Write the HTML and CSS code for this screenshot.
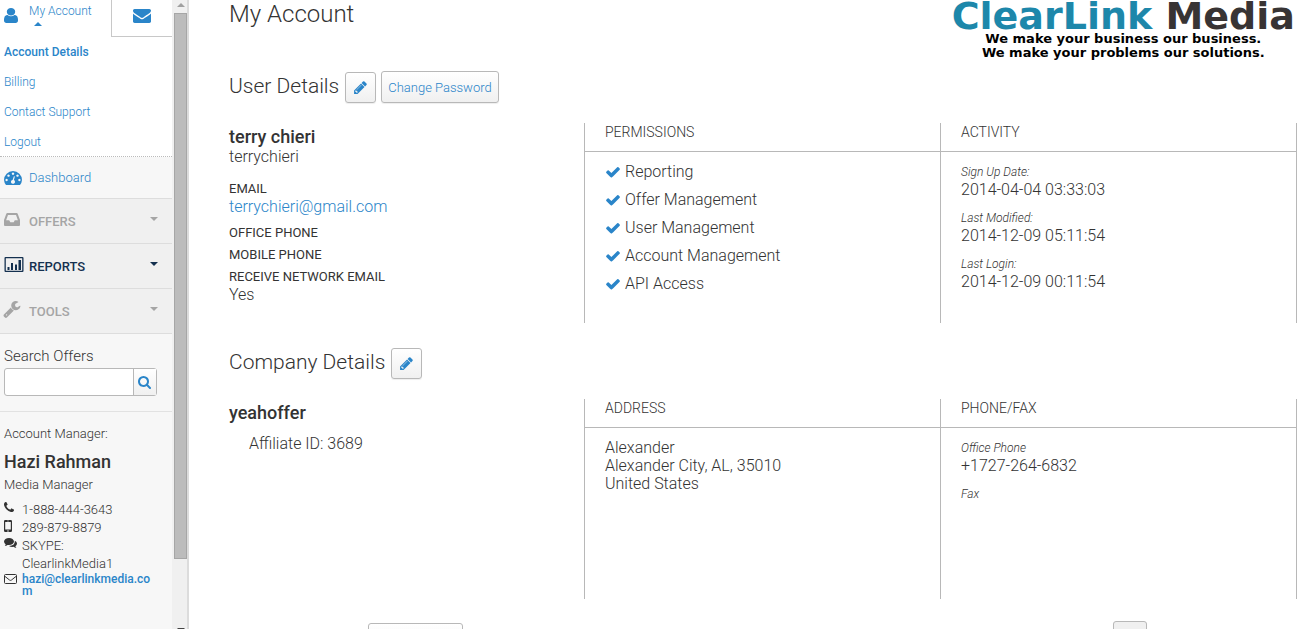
FILE: index.html
```html
<!DOCTYPE html>
<html lang="en">

<head>
    <meta charset="UTF-8">
    <meta name="viewport" content="width=device-width, initial-scale=1.0">
    <title>My Account</title>
    <link rel="stylesheet" href="styles.css">
</head>

<body>
    <!-- Shared icons -->
    <svg class="sprite" width="0" height="0" aria-hidden="true">
        <symbol id="pencil" viewBox="0 0 1792 1792">
            <path d="M491 1536l91-91-235-235-91 91v107h128v128h107zm523-928q0-22-22-22-10 0-17 7l-542 542q-7 7-7 17 0 22 22 22 10 0 17-7l542-542q7-7 7-17zm-54-192l416 416-832 832h-416v-416zm683 96q0 53-37 90l-166 166-416-416 166-165q36-38 90-38 53 0 91 38l235 234q37 39 37 91z"/>
        </symbol>
        <symbol id="check" viewBox="0 0 1792 1792">
            <path d="M1671 566q0 40-28 68l-724 724-136 136q-28 28-68 28t-68-28l-136-136-362-362q-28-28-28-68t28-68l136-136q28-28 68-28t68 28l294 295 656-657q28-28 68-28t68 28l136 136q28 28 28 68z"/>
        </symbol>
    </svg>

    <aside class="sidebar">
        <div class="sidebar-content">
            <div class="tabs">
                <a class="tab-account" href="#">
                    <svg class="icon-user" width="14" height="15" viewBox="256 128 1280 1536" preserveAspectRatio="none">
                        <path d="M1536 1399q0 109-62.5 187t-150.5 78h-854q-88 0-150.5-78t-62.5-187q0-85 8.5-160.5t31.5-152 58.5-131 94-89 134.5-34.5q131 128 313 128t313-128q76 0 134.5 34.5t94 89 58.5 131 31.5 152 8.5 160.5zm-256-887q0 159-112.5 271.5t-271.5 112.5-271.5-112.5-112.5-271.5 112.5-271.5 271.5-112.5 271.5 112.5 112.5 271.5z"/>
                    </svg>
                    <span class="tab-label">My Account<span class="caret-up"></span></span>
                </a>
                <a class="tab-mail" href="#" aria-label="Messages">
                    <svg width="18" height="14" viewBox="0 256 1792 1408" preserveAspectRatio="none">
                        <path d="M1792 710v794q0 66-47 113t-113 47h-1472q-66 0-113-47t-47-113v-794q44 49 101 87 362 246 497 345 57 42 92.500 65.500t94.500 48 110 24.500h2q51 0 110-24.500t94.500-48 92.500-65.500q170-123 498-345 57-39 100-87zm0-294q0 79-49 151t-122 123q-376 261-468 325-10 7-42.500 31t-54 38.500-52 32.500-57.500 27-50 9h-2q-23 0-50-9t-57.500-27-52-32.500-54-38.500-42.500-31q-91-64-262-182.500t-205-142.500q-62-42-117-115.500t-55-136.500q0-78 41.500-130t118.500-52h1472q65 0 112.500 47t47.500 113z"/>
                    </svg>
                </a>
            </div>

            <nav class="account-menu">
                <a class="active" href="#">Account Details</a>
                <a href="#">Billing</a>
                <a href="#">Contact Support</a>
                <a href="#">Logout</a>
            </nav>

            <nav class="main-menu">
                <a class="menu-dashboard" href="#">
                    <svg width="18" height="14" viewBox="0 0 18 14">
                        <path fill-rule="evenodd" d="M2 14A9 9 0 0 1 0 9a9 9 0 0 1 18 0 9 9 0 0 1-2 5zM2.600 7.800a1.200 1.200 0 1 0 .01 0zM4.500 3.400a1.200 1.200 0 1 0 .01 0zM9 1.500a1.200 1.200 0 1 0 .01 0zM13.500 3.400a1.200 1.200 0 1 0 .01 0zM15.400 7.800a1.200 1.200 0 1 0 .01 0zM9.900 5.200 8.600 8.900a2 2 0 1 0 1.300.200L10.900 5.500z"/>
                    </svg>
                    Dashboard
                </a>
                <a class="menu-group" href="#">
                    <svg width="16" height="13" viewBox="0 0 16 13">
                        <path fill-rule="evenodd" d="M3.300 0h9.400q.7 0 1 .7L16 7v5q0 1-1 1H1q-1 0-1-1V7L2.300.700Q2.600 0 3.300 0zM4 2 2.100 7.200h3.100L6.300 9.300h3.400l1.100-2.100h3.100L12 2z"/>
                    </svg>
                    OFFERS
                    <span class="caret-down"></span>
                </a>
                <a class="menu-group menu-open" href="#">
                    <svg width="19" height="15" viewBox="0 0 19 15">
                        <path fill-rule="evenodd" d="M1 0h17q1 0 1 1v13q0 1-1 1H1q-1 0-1-1V1q0-1 1-1zM1.300 1.300v12.400h16.400V1.300z"/>
                        <path d="M3 10h2v3H3zM6.500 6h2v7h-2zM10.500 7.500h2V13h-2zM14 3h2.500v10H14z"/>
                    </svg>
                    REPORTS
                    <span class="caret-down"></span>
                </a>
                <a class="menu-group" href="#">
                    <svg width="17" height="17" viewBox="85 128 1650 1650">
                        <path d="M448 1472q0-26-19-45t-45-19-45 19-19 45 19 45 45 19 45-19 19-45zm644-420l-682 682q-37 37-90 37-52 0-91-37l-106-108q-38-36-38-90 0-53 38-91l681-681q39 98 114.500 173.500t173.500 114.500zm634-435q0 39-23 106-47 134-164.500 217.500t-258.500 83.500q-185 0-316.500-131.500t-131.500-316.500 131.500-316.500 316.500-131.500q58 0 121.500 16.500t107.500 46.500q16 11 16 28t-16 28l-293 169v224l193 107q5-3 79-48.500t135.500-81 70.500-35.500q15 0 23.500 10t8.500 25z"/>
                    </svg>
                    TOOLS
                    <span class="caret-down"></span>
                </a>
            </nav>

            <form class="search">
                <label for="search">Search Offers</label>
                <div class="search-box">
                    <input type="text" id="search" name="search">
                    <button type="button" aria-label="Search">
                        <svg width="13" height="13" viewBox="64 128 1664 1664">
                            <path d="M1216 832q0-185-131.500-316.500t-316.500-131.500-316.500 131.500-131.500 316.500 131.500 316.500 316.500 131.500 316.500-131.500 131.500-316.500zm512 832q0 52-38 90t-90 38q-54 0-90-38l-343-342q-179 124-399 124-143 0-273.500-55.500t-225-150-150-225-55.500-273.500 55.500-273.500 150-225 225-150 273.500-55.500 273.500 55.500 225 150 150 225 55.500 273.500q0 220-124 399l343 343q37 37 37 90z"/>
                        </svg>
                    </button>
                </div>
            </form>

            <div class="manager">
                <p>Account Manager:</p>
                <h4>Hazi Rahman</h4>
                <p>Media Manager</p>
                <ul class="contacts">
                    <li>
                        <svg width="10" height="10" viewBox="192 128 1408 1408">
                            <path d="M1600 1240q0 27-10 70.500t-21 68.500q-21 50-122 106-94 51-186 51-27 0-53-3.500t-57.500-12.500-47-14.500-55.500-20.500-49-18q-98-35-175-83-127-79-264-216t-216-264q-48-77-83-175-3-9-18-49t-20.500-55.500-14.500-47-12.500-57.500-3.500-53q0-92 51-186 56-101 106-122 25-11 68.500-21t70.500-10q14 0 21 3 18 6 53 76 11 19 30 54t35 63.500 31 53.500q3 4 17.500 25t21.500 35.500 7 28.500q0 20-28.500 50t-62 55-62 53-28.500 46q0 9 5 22.500t8.500 20.500 14 24 11.500 19q76 137 174 235t235 174q2 1 19 11.500t24 14 20.500 8.500 22.500 5q18 0 46-28.500t53-62 55-62 50-28.500q14 0 28.500 7t35.500 21.500 25 17.500q25 15 53.500 31t63.500 35 54 30q70 35 76 53 3 7 3 21z"/>
                        </svg>
                        <span>1-888-444-3643</span>
                    </li>
                    <li>
                        <svg width="8" height="12" viewBox="0 0 8 12">
                            <path fill-rule="evenodd" d="M1.300 0h5.400Q8 0 8 1.300v9.400Q8 12 6.700 12H1.300Q0 12 0 10.700V1.300Q0 0 1.300 0zM1.200 2v7.600h5.600V2zM4 10.200a.7.7 0 1 0 .01 0zM3 .8v.4h2V.8z"/>
                        </svg>
                        <span>289-879-8879</span>
                    </li>
                    <li>
                        <svg width="13" height="10" viewBox="0 0 13 10">
                            <path d="M5 0c2.800 0 5 1.600 5 3.500S7.800 7 5 7q-.8 0-1.500-.1Q2.400 7.900.7 8.100q.9-.8 1-1.700Q0 5.300 0 3.500C0 1.600 2.200 0 5 0z"/>
                            <path d="M10.900 2.700Q13 3.800 13 5.500q0 1.600-1.600 2.700.2.900 1 1.700-1.700-.1-2.900-1.100-2.600.5-4.500-.9 5.900 0 5.900-5.200z"/>
                        </svg>
                        <span>SKYPE: ClearlinkMedia1</span>
                    </li>
                    <li>
                        <svg width="13" height="10" viewBox="0 0 13 10">
                            <path fill="none" stroke="#333" d="M1.500.5h10q1 0 1 1v7q0 1-1 1h-10q-1 0-1-1v-7q0-1 1-1zM.7 2.200 5.500 6q1 .8 2 0l4.800-3.800"/>
                        </svg>
                        <a href="#">hazi@clearlinkmedia.com</a>
                    </li>
                </ul>
            </div>
        </div>

        <div class="scrollbar" aria-hidden="true">
            <span class="arrow-up"></span>
            <span class="thumb"></span>
            <span class="arrow-down"></span>
        </div>
    </aside>

    <main class="content">
        <header class="page-header">
            <h1>My Account</h1>
            <div class="logo">
                <div class="logo-name">ClearLink <span>Media</span></div>
                <div class="logo-tag">We make your business our business.<br>We make your problems our solutions.</div>
            </div>
        </header>

        <section class="section">
            <div class="section-title">
                <h2>User Details</h2>
                <button type="button" class="btn btn-icon" aria-label="Edit user details">
                    <svg width="15" height="15"><use href="#pencil"/></svg>
                </button>
                <button type="button" class="btn">Change Password</button>
            </div>
            <div class="columns">
                <div class="summary">
                    <h3>terry chieri</h3>
                    <p>terrychieri</p>
                    <dl>
                        <dt>EMAIL</dt>
                        <dd><a href="#">terrychieri@gmail.com</a></dd>
                        <dt>OFFICE PHONE</dt>
                        <dt>MOBILE PHONE</dt>
                        <dt>RECEIVE NETWORK EMAIL</dt>
                        <dd>Yes</dd>
                    </dl>
                </div>
                <div class="panel">
                    <h5>PERMISSIONS</h5>
                    <ul class="permissions">
                        <li><svg width="16" height="16"><use href="#check"/></svg>Reporting</li>
                        <li><svg width="16" height="16"><use href="#check"/></svg>Offer Management</li>
                        <li><svg width="16" height="16"><use href="#check"/></svg>User Management</li>
                        <li><svg width="16" height="16"><use href="#check"/></svg>Account Management</li>
                        <li><svg width="16" height="16"><use href="#check"/></svg>API Access</li>
                    </ul>
                </div>
                <div class="panel">
                    <h5>ACTIVITY</h5>
                    <dl class="facts">
                        <dt>Sign Up Date:</dt>
                        <dd>2014-04-04 03:33:03</dd>
                        <dt>Last Modified:</dt>
                        <dd>2014-12-09 05:11:54</dd>
                        <dt>Last Login:</dt>
                        <dd>2014-12-09 00:11:54</dd>
                    </dl>
                </div>
            </div>
        </section>

        <section class="section section-company">
            <div class="section-title">
                <h2>Company Details</h2>
                <button type="button" class="btn btn-icon" aria-label="Edit company details">
                    <svg width="15" height="15"><use href="#pencil"/></svg>
                </button>
            </div>
            <div class="columns">
                <div class="summary">
                    <h3>yeahoffer</h3>
                    <p class="affiliate">Affiliate ID: 3689</p>
                </div>
                <div class="panel">
                    <h5>ADDRESS</h5>
                    <address>Alexander<br>Alexander City, AL, 35010<br>United States</address>
                </div>
                <div class="panel">
                    <h5>PHONE/FAX</h5>
                    <dl class="facts">
                        <dt>Office Phone</dt>
                        <dd>+1727-264-6832</dd>
                        <dt>Fax</dt>
                    </dl>
                </div>
            </div>
        </section>

        <!-- Next section, continues below the fold -->
        <section class="section-title section-next">
            <button type="button" class="btn btn-add" aria-label="Add"></button>
            <button type="button" class="btn btn-page" aria-label="Page"></button>
        </section>
    </main>
</body>

</html>
```
FILE: styles.css
```css
* {
    box-sizing: border-box;
}

body {
    display: flex;
    height: 100vh;
    margin: 0;
    overflow: hidden;
    background: #fff;
    color: #333;
    font-family: Roboto, Arial, sans-serif;
    font-size: 16px;
    font-weight: 300;
    line-height: 18px;
}

h1, h2, h3, h4, h5, p, ul, dl, dd {
    margin: 0;
    padding: 0;
}

ul {
    list-style: none;
}

a {
    color: #2a85c9;
    text-decoration: none;
}

svg {
    display: block;
    flex: none;
    fill: currentColor;
}

.sprite {
    position: absolute;
}

/* Sidebar */
.sidebar {
    display: flex;
    flex: none;
    width: 189px;
    background: #f7f7f7;
    font-size: 13px;
}

.sidebar-content {
    flex: 1;
    min-width: 0;
}

.tabs {
    display: flex;
    height: 37px;
    background: #fff;
    font-size: 12px;
}

.tab-account {
    display: flex;
    flex: 1;
    gap: 11px;
    padding: 2px 0 0 4px;
}

.icon-user {
    margin-top: 6px;
}

.tab-mail {
    display: flex;
    align-items: center;
    justify-content: center;
    width: 61px;
    padding-bottom: 4px;
    border-left: 1px solid #c8c8c8;
    border-bottom: 1px solid #c8c8c8;
}

.caret-up {
    display: block;
    width: 8px;
    margin: 2px 0 0 5px;
    border: 4px solid transparent;
    border-top: 0;
    border-bottom-color: #2a85c9;
}

.account-menu {
    height: 120px;
    background: #fff;
    border-bottom: 1px dotted #bbb;
    font-size: 12px;
}

.account-menu a {
    display: block;
    padding-left: 4px;
    line-height: 30px;
}

.account-menu .active {
    font-weight: 500;
}

.main-menu a {
    display: flex;
    align-items: center;
    height: 45px;
    padding: 0 14px 0 4px;
    border-bottom: 1px solid #ddd;
}

.main-menu svg {
    margin-right: 7px;
}

.main-menu .menu-dashboard {
    height: 42px;
}

.main-menu .menu-group {
    padding-top: 2px;
    background: #f0f0f0;
    color: #a5a5a5;
    font-weight: 500;
}

.menu-group svg {
    width: 20px;
    margin: 0 5px 5px 0;
}

.menu-group svg:not([width="19"]) {
    margin-left: -2px;
    margin-right: 7px;
}

.main-menu .menu-open {
    color: #14304f;
}

.caret-down {
    margin: 0 0 6px auto;
    border: 4px solid transparent;
    border-bottom: 0;
    border-top-color: currentColor;
}

.search {
    padding: 13px 15px 15px 4px;
    border-bottom: 1px solid #e2e2e2;
}

.search label {
    display: block;
    margin-bottom: 3px;
    font-size: 15px;
}

.search-box {
    display: flex;
    height: 28px;
    border: 1px solid #b8b8b8;
    border-radius: 3px;
    background: #fff;
}

.search-box input {
    flex: 1;
    min-width: 0;
    border: 0;
    background: none;
}

.search-box button {
    width: 23px;
    padding: 0 0 0 4px;
    border: 0;
    border-left: 1px solid #b8b8b8;
    background: linear-gradient(#fff, #f0f0f0);
    color: #2a85c9;
}

.manager {
    padding: 13px 15px 0 4px;
}

.manager h4 {
    margin: 8px 0 3px;
    font-size: 18px;
    font-weight: 500;
    line-height: 22px;
}

.contacts {
    margin-top: 7px;
}

.contacts li {
    display: flex;
    align-items: flex-start;
    padding-right: 4px;
}

.contacts svg {
    margin-top: 1px;
}

.contacts span,
.contacts a {
    width: 131px;
    margin-left: auto;
}

.contacts a {
    font-size: 12px;
    font-weight: 500;
    line-height: 12px;
    word-break: break-all;
}

/* Scrollbar beside the menu */
.scrollbar {
    display: flex;
    flex-direction: column;
    align-items: center;
    width: 17px;
    padding-left: 2px;
    border-right: 2px solid #dcdcdc;
    background: #f0f0f0;
}

.arrow-up,
.arrow-down {
    border: 4px solid transparent;
}

.arrow-up {
    margin: 3px 0 6px;
    border-top: 0;
    border-bottom-color: #a0a0a0;
}

.arrow-down {
    margin: 69px 0 -3px;
    border-bottom: 0;
    border-top-color: #444;
}

.thumb {
    flex: 1;
    width: 13px;
    border: 1px solid #a6a6a6;
    background: #bcbcbc;
}

/* Main column */
.content {
    flex: 1;
    min-width: 0;
    padding: 0 17px 0 40px;
}

.page-header {
    display: flex;
    justify-content: space-between;
    height: 71px;
}

h1 {
    font-size: 24px;
    font-weight: 300;
    line-height: 28px;
}

.logo {
    padding-right: 2px;
    color: #000;
    font-family: "DejaVu Sans", Verdana, sans-serif;
    font-weight: 700;
    text-align: center;
}

.logo-name {
    color: #1d87aa;
    font-size: 38px;
    line-height: 32px;
}

.logo-name span {
    color: #383434;
}

.logo-tag {
    font-size: 13px;
    line-height: 14px;
}

.section {
    margin-bottom: 24px;
}

.section-company {
    margin-bottom: 22px;
}

.section-title {
    display: flex;
    align-items: flex-end;
    gap: 5px;
    min-height: 32px;
}

h2 {
    height: 32px;
    margin-right: 1px;
    font-size: 21px;
    font-weight: 300;
    line-height: 30px;
}

.btn {
    height: 32px;
    padding: 0 6px;
    border: 1px solid #b8b8b8;
    border-radius: 3px;
    background: linear-gradient(#fff, #f0f0f0);
    box-shadow: 0 1px 1px #eee;
    color: #2a85c9;
    font-family: inherit;
    font-size: 13px;
    font-weight: 300;
}

.btn-icon {
    width: 31px;
    height: 31px;
    padding: 0 7px;
}

.columns {
    display: grid;
    grid-template-columns: 355px 1fr 1fr;
    min-height: 200px;
    margin-top: 20px;
    border-right: 1px solid #b8b8b8;
}

.panel {
    border-left: 1px solid #b8b8b8;
}

.panel h5 {
    height: 29px;
    padding-left: 20px;
    border-bottom: 1px solid #b8b8b8;
    font-size: 14px;
    font-weight: 300;
}

.summary h3 {
    padding-top: 3px;
    font-size: 18px;
    font-weight: 500;
    line-height: 22px;
}

.summary dl {
    margin-top: 14px;
}

.summary dt {
    font-size: 13px;
    font-weight: 400;
}

.summary dt + dt {
    margin-top: 4px;
}

.summary dd + dt {
    margin-top: 8px;
}

.summary .affiliate {
    padding: 11px 0 0 20px;
}

.permissions {
    padding: 6px 20px;
}

.permissions li {
    display: flex;
    align-items: center;
    gap: 4px;
    line-height: 28px;
}

.permissions svg {
    color: #2a85c9;
}

.facts {
    padding: 11px 20px;
}

.facts dt {
    font-size: 12px;
    font-style: italic;
}

.facts dd {
    margin-bottom: 10px;
}

address {
    padding: 11px 20px;
    font-style: normal;
}

.section-next {
    justify-content: space-between;
    padding: 0 150px 0 139px;
}

.btn-add {
    width: 95px;
}

.btn-page {
    width: 34px;
    height: 34px;
    background: #f0f0f0;
}
```
